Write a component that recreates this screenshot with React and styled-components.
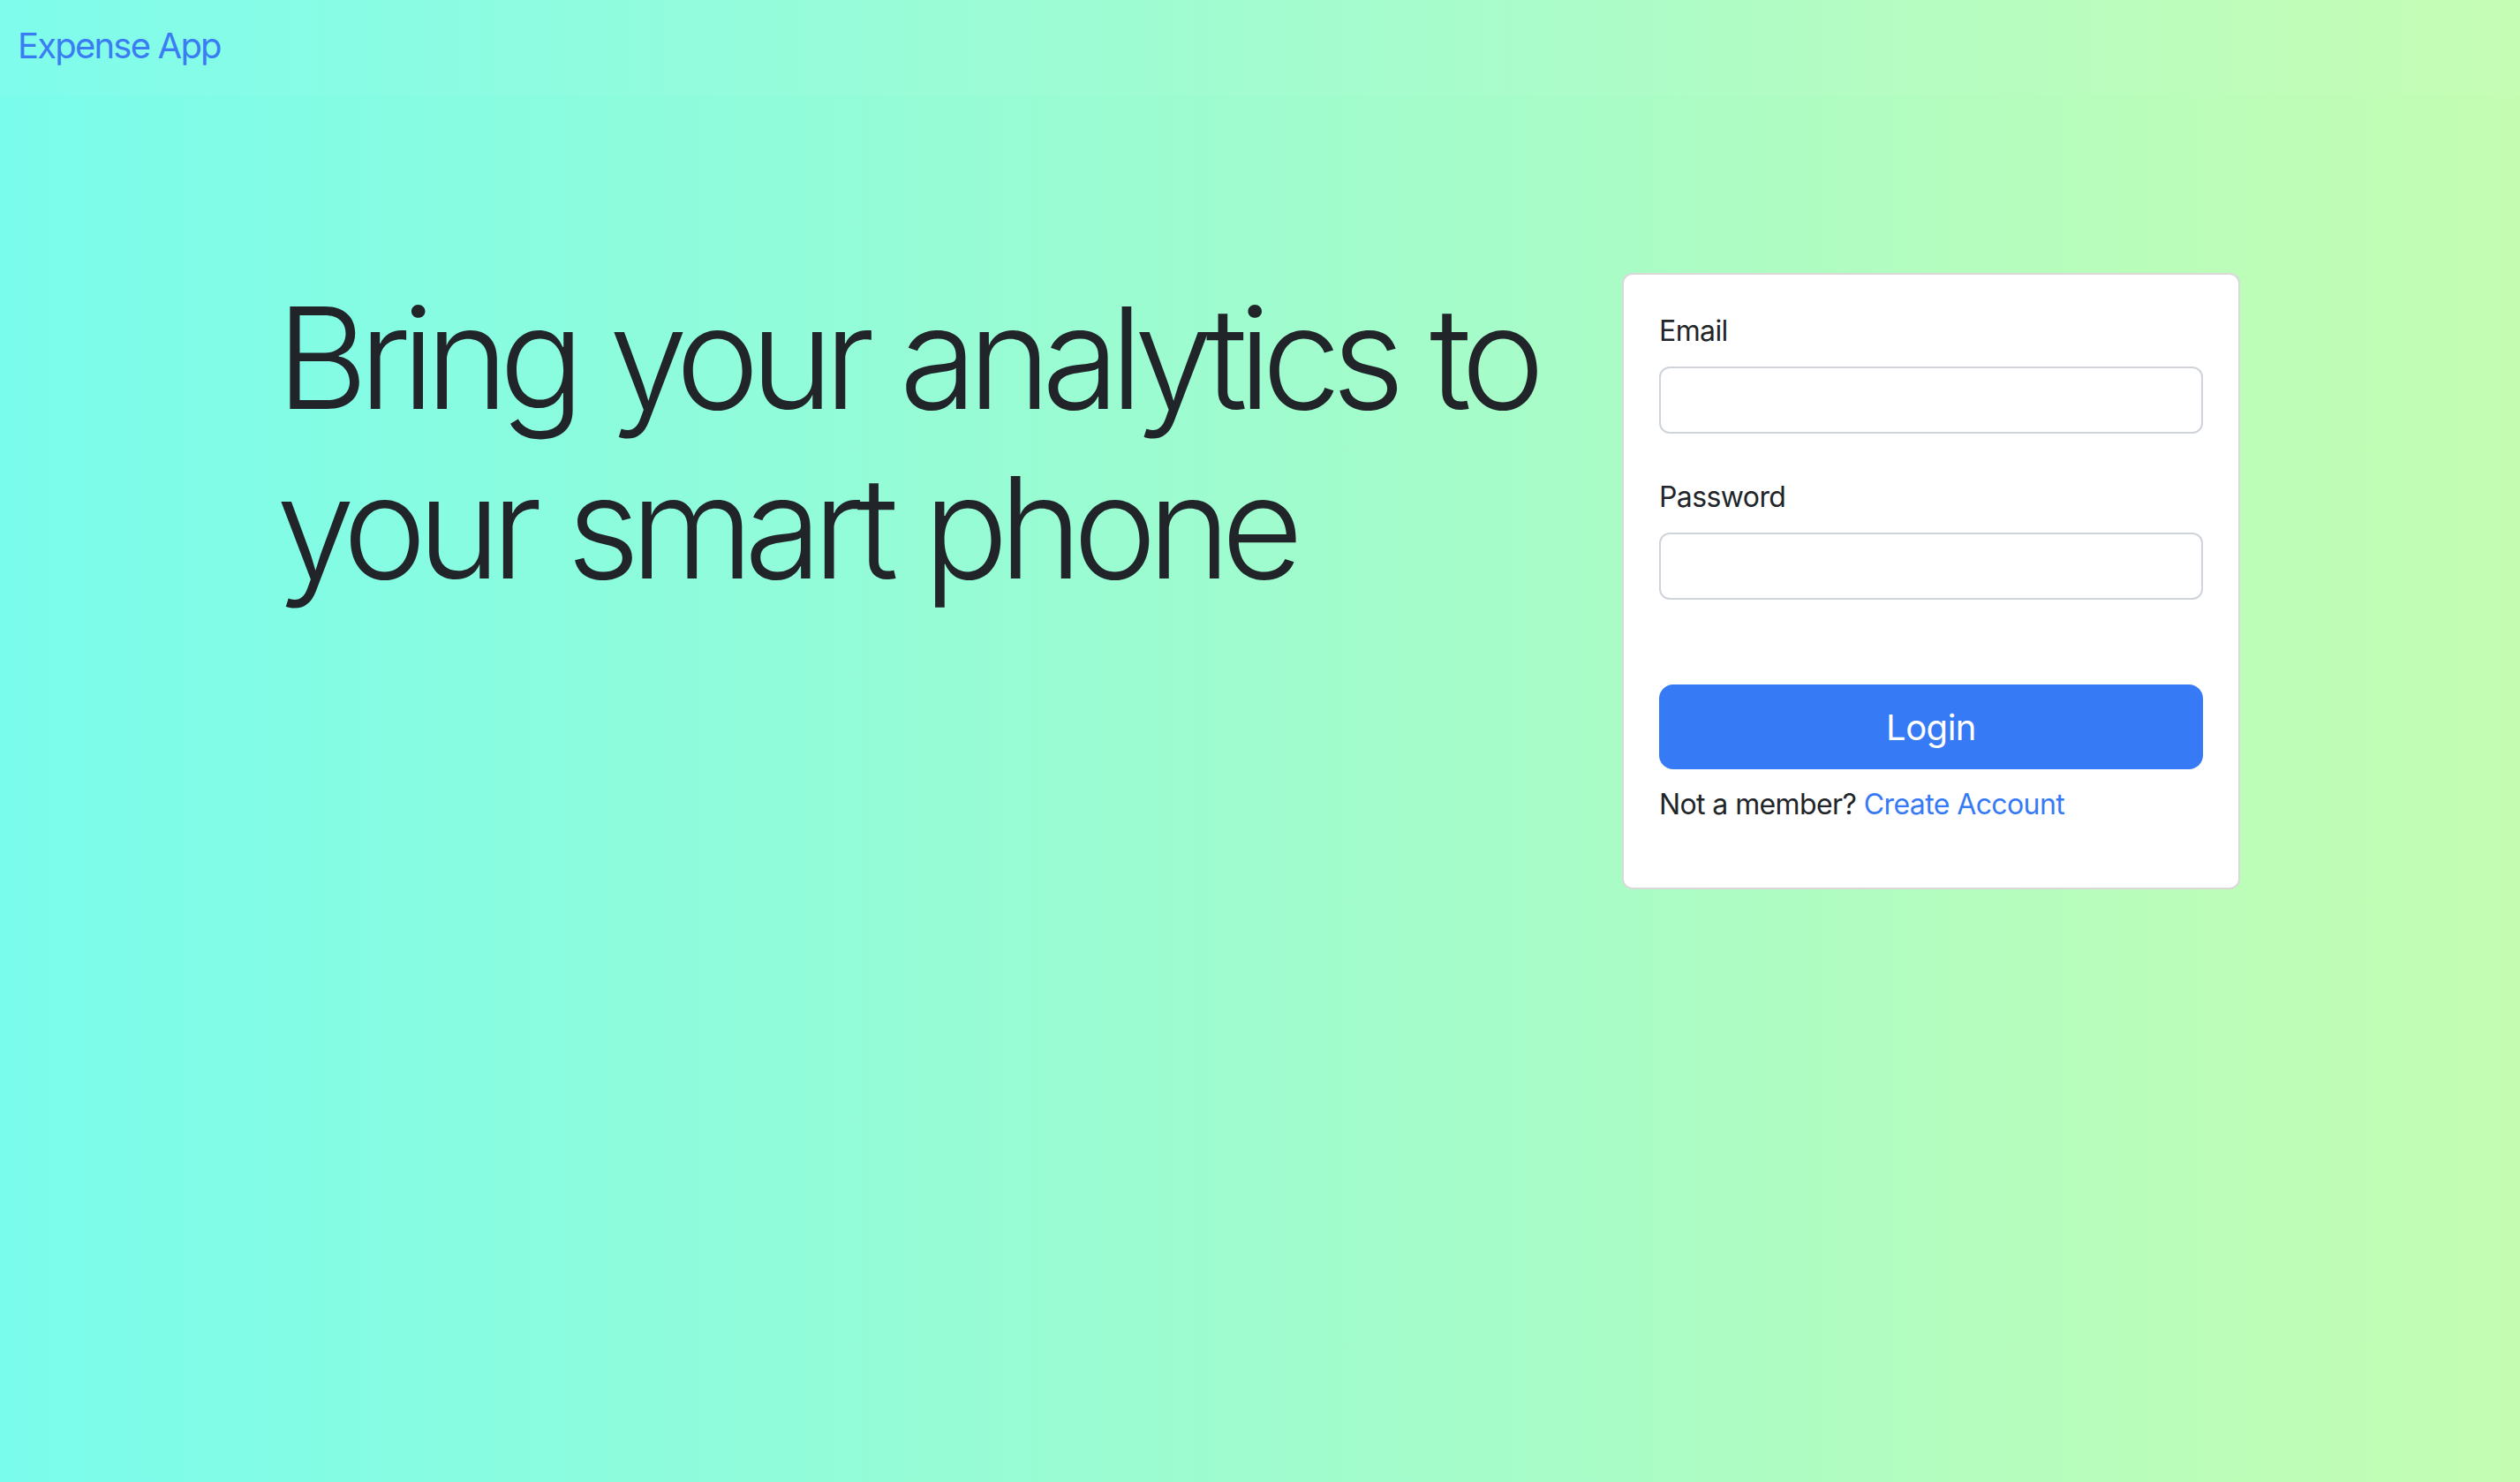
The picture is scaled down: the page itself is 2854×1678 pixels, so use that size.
import React from "react";
import styled, { createGlobalStyle } from "styled-components";

const GlobalStyle = createGlobalStyle`
  html, body {
    margin: 0;
    padding: 0;
  }

  body {
    min-height: 100vh;
    font-family: Inter, "Noto Sans", "Liberation Sans", sans-serif;
    color: #212529;
    background: linear-gradient(90deg, #7afcec 0%, #9ffcce 50%, #c4fdb2 100%);
  }
`;

const Page = styled.div`
  min-height: 100vh;
`;

const Navbar = styled.nav`
  display: flex;
  align-items: center;
  height: 108px;
  padding: 0 20px;
  background: rgba(255, 255, 255, 0.04);
`;

const Brand = styled.a`
  font-size: 40px;
  line-height: 60px;
  color: #3a7cf3;
  text-decoration: none;
  letter-spacing: -1.8px;
  margin-top: -4px;
`;

const Container = styled.main`
  width: 2232px;
  margin: 0 auto;
`;

const Row = styled.div`
  display: flex;
  justify-content: space-between;
  align-items: flex-start;
  padding-top: 201px;
`;

const Headline = styled.h1`
  margin: 0;
  padding-left: 2px;
  width: 1480px;
  font-size: 160px;
  font-weight: 300;
  line-height: 192px;
  letter-spacing: -10.5px;
  word-spacing: 4px;
  color: #212529;
`;

const Card = styled.div`
  width: 700px;
  box-sizing: border-box;
  margin-right: 6px;
  padding: 40px;
  background: #fff;
  border: 2px solid rgba(0, 0, 0, 0.15);
  border-radius: 12px;
`;

const Form = styled.form`
  display: flex;
  flex-direction: column;
`;

const Field = styled.div`
  margin-bottom: 48px;
`;

const Label = styled.label`
  display: block;
  margin-bottom: 16px;
  font-size: 32px;
  line-height: 48px;
  letter-spacing: -0.6px;
  color: #212529;
`;

const Input = styled.input`
  display: block;
  width: 100%;
  height: 76px;
  box-sizing: border-box;
  padding: 12px 24px;
  font-size: 32px;
  font-family: inherit;
  background: #fff;
  border: 2px solid #ced4da;
  border-radius: 12px;
  outline: none;
`;

const Button = styled.button`
  display: block;
  width: 100%;
  height: 96px;
  margin-top: 48px;
  font-family: inherit;
  font-size: 40px;
  letter-spacing: -0.5px;
  color: #fff;
  background: #377af5;
  border: none;
  border-radius: 16px;
  cursor: pointer;
`;

const Note = styled.p`
  margin: 16px 0 30px;
  font-size: 32px;
  line-height: 48px;
  letter-spacing: -0.6px;
  color: #212529;
`;

const Link = styled.a`
  color: #377af5;
  text-decoration: none;
`;

const App = () => {
  return (
    <Page>
      <GlobalStyle />
      <Navbar>
        <Brand href="#">Expense App</Brand>
      </Navbar>
      <Container>
        <Row>
          <Headline>Bring your analytics to your smart phone</Headline>
          <Card>
            <Form onSubmit={(e) => e.preventDefault()}>
              <Field>
                <Label htmlFor="email">Email</Label>
                <Input id="email" type="email" />
              </Field>
              <Field>
                <Label htmlFor="password">Password</Label>
                <Input id="password" type="password" />
              </Field>
              <Button type="submit">Login</Button>
              <Note>
                Not a member? <Link href="#">Create Account</Link>
              </Note>
            </Form>
          </Card>
        </Row>
      </Container>
    </Page>
  );
};

export default App;
